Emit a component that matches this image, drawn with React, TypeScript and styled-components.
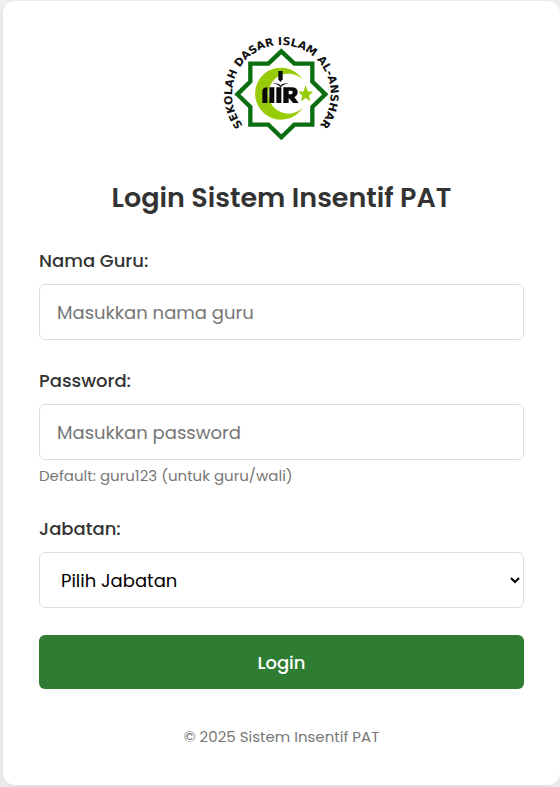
import React from "react";
import styled, { createGlobalStyle } from "styled-components";

const GlobalStyle = createGlobalStyle`
  *, *::before, *::after { box-sizing: border-box; }
  body {
    margin: 0;
    background: #f2f2f2;
    color: #333;
    font-family: Poppins, Inter, "Open Sans", sans-serif;
  }
`;

const Page = styled.main`
  min-height: 100vh;
  padding: 1px 0 2px 3px;
`;

const Card = styled.section`
  display: flex;
  flex-direction: column;
  padding: 24px 36px 36px;
  background: #fff;
  border-radius: 12px;
  box-shadow: 0 4px 16px rgba(0, 0, 0, 0.1);
`;

const Logo = styled.svg`
  align-self: center;
  width: 145px;
  height: 125px;
`;

const Title = styled.h1`
  margin: 28px 0 29px;
  font-size: 27px;
  line-height: 40px;
  font-weight: 600;
  text-align: center;
`;

const Form = styled.form`
  display: flex;
  flex-direction: column;
  gap: 27px;
`;

const Field = styled.div`
  display: flex;
  flex-direction: column;
`;

const Label = styled.label`
  margin-bottom: 9px;
  font-size: 18px;
  line-height: 28px;
  font-weight: 500;
`;

const Input = styled.input`
  width: 100%;
  height: 56px;
  padding: 0 17px;
  border: 1px solid #ddd;
  border-radius: 6px;
  background: #fff;
  font: inherit;
  font-size: 18px;

  &::placeholder { color: #757575; }
`;

const Select = styled.select`
  width: 100%;
  height: 56px;
  padding: 0 0 0 17px;
  border: 1px solid #ddd;
  border-radius: 6px;
  background: #fff;
  color: #000;
  font: inherit;
  font-size: 18px;
`;

const Hint = styled.small`
  margin-top: 4px;
  color: #777;
  font-size: 15px;
  line-height: 24px;
`;

const Button = styled.button`
  height: 54px;
  border: 0;
  border-radius: 6px;
  background: #2e7d32;
  color: #fff;
  font: inherit;
  font-size: 18px;
  font-weight: 500;
  cursor: pointer;
`;

const Footer = styled.footer`
  margin-top: 36px;
  color: #777;
  font-size: 15px;
  line-height: 24px;
  text-align: center;
`;

const SchoolLogo = () => (
  <Logo viewBox="0 0 435 375" role="img" aria-label="Sekolah Dasar Islam Al-Anshar">
    <defs>
      <path id="motto" d="M 217 356 A 148 148 0 0 1 217 60 A 148 148 0 0 1 217 356" />
    </defs>
    <text fontFamily="'DejaVu Sans', sans-serif" fontWeight="700" fontSize="33" fill="#111" textAnchor="middle">
      <textPath href="#motto" startOffset="50%">SEKOLAH DASAR ISLAM AL-ANSHAR</textPath>
    </text>
    <path
      d="M217 79 L256 116 H310 V170 L349 208 L310 246 V299 H256 L217 337 L178 299 H124 V246 L85 208 L124 170 V116 H178 Z"
      fill="#fff"
      stroke="#0b6f12"
      strokeWidth="13"
    />
    <path d="M283 166 A78 78 0 1 0 283 246 A60 60 0 1 1 283 166 Z" fill="#99cc08" />
    <path d="M290 180 L296 199 L312 200 L300 212 L304 229 L290 219 L276 229 L280 212 L268 200 L284 199 Z" fill="#99cc08" />
    <g fill="#0a0a0a">
      <path d="M208 138 H221 V163 L214 171 L208 163 Z" />
      <path d="M192 175 Q209 174 215 182 Q221 174 238 175 Q222 178 215 187 Q208 178 192 175 Z" />
      <path d="M160 234 V200 Q160 187 175 187 V234 Z M181 187 H196 V234 H181 Z M202 187 H217 V234 H202 Z" />
      <path fillRule="evenodd" d="M223 187 H247 Q266 187 266 202 Q266 212 256 216 L269 234 H252 L239 218 V234 H223 Z M239 197 V208 H246 Q251 208 251 202 Q251 197 246 197 Z" />
    </g>
  </Logo>
);

export default function App() {
  return (
    <>
      <GlobalStyle />
      <Page>
        <Card>
          <SchoolLogo />
          <Title>Login Sistem Insentif PAT</Title>
          <Form onSubmit={(event) => event.preventDefault()}>
            <Field>
              <Label htmlFor="nama">Nama Guru:</Label>
              <Input id="nama" type="text" placeholder="Masukkan nama guru" />
            </Field>
            <Field>
              <Label htmlFor="password">Password:</Label>
              <Input id="password" type="password" placeholder="Masukkan password" aria-describedby="password-hint" />
              <Hint id="password-hint">Default: guru123 (untuk guru/wali)</Hint>
            </Field>
            <Field>
              <Label htmlFor="jabatan">Jabatan:</Label>
              <Select id="jabatan" defaultValue="">
                <option value="">Pilih Jabatan</option>
              </Select>
            </Field>
            <Button type="submit">Login</Button>
          </Form>
          <Footer>© 2025 Sistem Insentif PAT</Footer>
        </Card>
      </Page>
    </>
  );
}
